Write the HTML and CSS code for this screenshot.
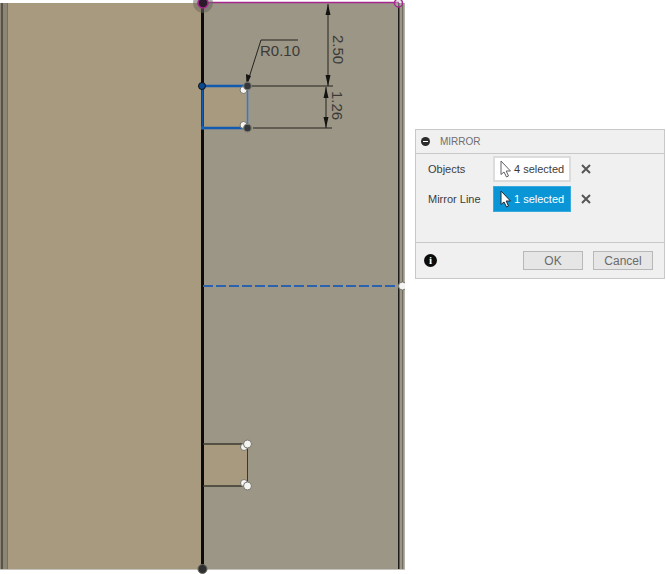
FILE: index.html
```html
<!DOCTYPE html>
<html lang="en">
<head>
    <meta charset="UTF-8">
    <meta name="viewport" content="width=device-width, initial-scale=1.0">
    <title>Mirror</title>
    <link rel="stylesheet" href="styles.css">
</head>
<body>
    <div class="stage">
        <svg class="sketch" width="405" height="574" viewBox="0 0 405 574">
            <!-- body faces -->
            <rect x="0" y="3" width="405" height="566" fill="#9c9686"/>
            <rect x="0" y="3" width="202" height="566" fill="#a89a7f"/>
            <rect x="0" y="3" width="7" height="566" fill="#8d8675"/>
            <rect x="1" y="3" width="2" height="566" fill="#55534c"/>
            <rect x="7" y="3" width="1" height="566" fill="#77705f"/>
            <rect x="398" y="3" width="1.5" height="566" fill="#1d1c1a"/>
            <rect x="402" y="3" width="1" height="566" fill="#6f6b60"/>
            <rect x="404" y="3" width="1" height="566" fill="#b5b2a9"/>
            <rect x="0" y="569" width="405" height="1" fill="#c4c2bc"/>

            <!-- tabs -->
            <rect x="203" y="86" width="44" height="42" fill="#a89a7f"/>
            <rect x="203" y="444" width="44" height="42" fill="#a89a7f"/>

            <!-- top line -->
            <line x1="203" y1="2.5" x2="399" y2="2.5" stroke="#a5268f" stroke-width="1.5"/>

            <!-- dimensions -->
            <g class="dim">
                <line x1="248" y1="86" x2="333" y2="86"/>
                <line x1="253" y1="128" x2="332" y2="128"/>
                <line x1="328" y1="4" x2="328" y2="86"/>
                <line x1="326" y1="87" x2="326" y2="128"/>
                <polyline points="261,40 298,40"/>
                <line x1="261" y1="40" x2="247" y2="84"/>
            </g>
            <g class="arrow">
                <polygon points="328,4 325.5,15 330.5,15"/>
                <polygon points="328,86 325.5,75 330.5,75"/>
                <polygon points="326,87 323.5,98 328.5,98"/>
                <polygon points="326,128 323.5,117 328.5,117"/>
                <polygon points="246.5,85 246,74 251,76"/>
            </g>
            <text class="dim-text" x="260" y="56">R0.10</text>
            <text class="dim-text" transform="translate(333,35) rotate(90)">2.50</text>
            <text class="dim-text" transform="translate(332,91) rotate(90)">1.26</text>

            <!-- origin line -->
            <line x1="202.5" y1="3" x2="202.5" y2="569" stroke="#0b0b0b" stroke-width="3"/>

            <!-- selected profile -->
            <polyline class="profile" points="247,86 202.5,86 202.5,128 247,128"/>
            <line class="profile-light" x1="247.5" y1="86" x2="247.5" y2="128"/>
            <line class="mirror-line" x1="203" y1="286" x2="399" y2="286"/>

            <!-- mirrored profile -->
            <polyline class="copy" points="203,444 247,444"/>
            <polyline class="copy" points="203,486 247,486"/>
            <line x1="247.5" y1="444" x2="247.5" y2="486" stroke="#23357f" stroke-width="1"/>

            <!-- points -->
            <circle cx="203" cy="3" r="10" fill="#6b6860" opacity="0.55"/>
            <circle cx="203" cy="3" r="5" fill="#2b1a29" stroke="#a5268f" stroke-width="1.5"/>
            <circle cx="398.5" cy="3" r="4" fill="#c9c5c8" fill-opacity="0.4" stroke="#a5268f" stroke-width="1.5"/>
            <circle cx="202" cy="86" r="3.5" fill="#0b4a91" stroke="#111" stroke-width="1"/>
            <rect x="201" y="126.5" width="3" height="3" fill="#1a66c4"/>
            <circle cx="243.5" cy="90" r="3.5" class="pt-white"/>
            <circle cx="243.5" cy="125" r="3.5" class="pt-white"/>
            <circle cx="247.5" cy="86" r="3.8" class="pt-dark"/>
            <circle cx="247.5" cy="128" r="3.8" class="pt-dark"/>
            <circle cx="244" cy="447" r="3.5" class="pt-white"/>
            <circle cx="244" cy="483" r="3.5" class="pt-white"/>
            <circle cx="247.5" cy="444" r="4" class="pt-white"/>
            <circle cx="247.5" cy="486" r="4" class="pt-white"/>
            <circle cx="402.5" cy="286" r="4" class="pt-white"/>
            <circle cx="202.5" cy="569" r="4.5" fill="#2f2f30" stroke="#6b6860" stroke-width="1"/>
        </svg>

        <section class="panel">
            <header class="panel-head">
                <span class="collapse"></span>
                <span class="panel-title">MIRROR</span>
            </header>
            <div class="panel-body">
                <div class="row">
                    <span class="row-label">Objects</span>
                    <div class="picker">
                        <svg class="cursor" width="13" height="18" viewBox="0 0 13 18">
                            <path d="M1 1 L1 14.5 L4 12 L6.5 17 L8.5 16 L6.2 11 L10.5 11 Z" fill="#fff" stroke="#5c6066" stroke-width="1"/>
                        </svg>
                        <span>4 selected</span>
                    </div>
                    <svg class="clear" width="10" height="10" viewBox="0 0 10 10">
                        <path d="M1 1 L9 9 M9 1 L1 9" stroke="#555" stroke-width="2"/>
                    </svg>
                </div>
                <div class="row">
                    <span class="row-label">Mirror Line</span>
                    <div class="picker active">
                        <svg class="cursor" width="13" height="18" viewBox="0 0 13 18">
                            <path d="M1 1 L1 14.5 L4 12 L6.5 17 L8.5 16 L6.2 11 L10.5 11 Z" fill="#fff" stroke="#1c2730" stroke-width="1"/>
                        </svg>
                        <span>1 selected</span>
                    </div>
                    <svg class="clear" width="10" height="10" viewBox="0 0 10 10">
                        <path d="M1 1 L9 9 M9 1 L1 9" stroke="#555" stroke-width="2"/>
                    </svg>
                </div>
            </div>
            <footer class="panel-foot">
                <span class="info">i</span>
                <button class="btn">OK</button>
                <button class="btn">Cancel</button>
            </footer>
        </section>
    </div>
</body>
</html>
```

FILE: styles.css
```css
body {
    margin: 0;
    background: white;
    font-family: "Liberation Sans", Arial, sans-serif;
}

.stage {
    display: flex;
    align-items: flex-start;
    width: 666px;
    height: 574px;
    overflow: hidden;
}

.sketch {
    display: block;
    flex: none;
}

.dim {
    stroke: #24231f;
    stroke-width: 1;
    fill: none;
}

.arrow {
    fill: #141412;
}

.dim-text {
    font-size: 15px;
    fill: #3b3a36;
}

.profile {
    fill: none;
    stroke: #1259b0;
    stroke-width: 2.5;
}

.profile-light {
    stroke: #2a7be0;
    stroke-width: 1.5;
}

.mirror-line {
    stroke: #2a62ad;
    stroke-width: 2;
    stroke-dasharray: 10 3;
}

.copy {
    fill: none;
    stroke: #3a382f;
    stroke-width: 1.5;
}

.pt-white {
    fill: #f4f4f2;
    stroke: #77756d;
    stroke-width: 1;
}

.pt-dark {
    fill: #33363b;
    stroke: #7c7a72;
    stroke-width: 1.2;
}

.panel {
    flex: none;
    box-sizing: border-box;
    width: 250px;
    height: 150px;
    margin: 129px 0 0 10px;
    display: flex;
    flex-direction: column;
    background: #f0f0f0;
    border: 1px solid #c8c8c8;
    color: #3c3c3c;
}

.panel-head {
    height: 23px;
    flex: none;
    display: flex;
    align-items: center;
    padding-left: 5px;
    border-bottom: 1px solid #c8c8c8;
}

.collapse {
    position: relative;
    width: 9px;
    height: 9px;
    border-radius: 50%;
    background: #2b2b2b;
    margin-right: 10px;
}

.collapse::after {
    content: "";
    position: absolute;
    left: 2px;
    top: 4px;
    width: 5px;
    height: 1px;
    background: white;
}

.panel-title {
    font-size: 10px;
    color: #6e6e6e;
}

.panel-body {
    flex: 1;
    display: flex;
    flex-direction: column;
    gap: 4px;
    padding-top: 2px;
}

.row {
    display: flex;
    align-items: center;
    height: 26px;
}

.row-label {
    width: 65px;
    margin-left: 12px;
    font-size: 11px;
}

.picker {
    box-sizing: border-box;
    width: 78px;
    height: 26px;
    display: flex;
    align-items: center;
    padding-left: 5px;
    gap: 1px;
    background: white;
    border: 2px solid #dcdcdc;
    font-size: 11px;
    white-space: nowrap;
}

.picker.active {
    background: #0a96d6;
    border: 1px solid #3aa9de;
    padding-left: 6px;
    color: white;
}

.clear {
    margin-left: 10px;
    flex: none;
}

.panel-foot {
    height: 35px;
    flex: none;
    display: flex;
    align-items: center;
    justify-content: flex-end;
    gap: 10px;
    padding-right: 11px;
    border-top: 1px solid #c8c8c8;
}

.info {
    width: 13px;
    height: 13px;
    border-radius: 50%;
    background: #0c0c0c;
    color: white;
    font: bold 11px/13px "Liberation Serif", serif;
    text-align: center;
    margin-right: auto;
    margin-left: 8px;
}

.btn {
    box-sizing: border-box;
    width: 60px;
    height: 19px;
    padding: 0;
    background: #e6e6e6;
    border: 1px solid #b8b8b8;
    font-family: "Liberation Sans", Arial, sans-serif;
    font-size: 12px;
    color: #6b6b6b;
}
```
